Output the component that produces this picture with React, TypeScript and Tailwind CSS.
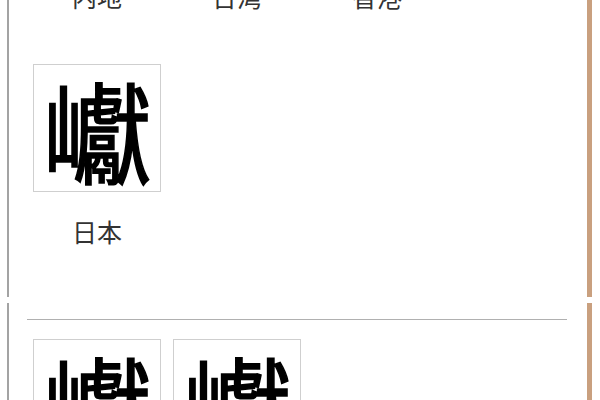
import React from "react";

const cjk = { fontFamily: '"Noto Sans CJK JP", "Noto Sans CJK SC", sans-serif' };

const GlyphBox: React.FC<{ ch: string }> = ({ ch }) => (
  <div
    className="w-[128px] h-[128px] border border-[#cfcfcf] flex items-center justify-center text-[110px] leading-none text-black [-webkit-text-stroke:1.5px_black] overflow-hidden"
    style={cjk}
  >
    {ch}
  </div>
);

const Label: React.FC<{ text: string }> = ({ text }) => (
  <div className="w-[128px] text-center text-[25px] leading-[30px] text-[#333]" style={cjk}>
    {text}
  </div>
);

export default function App() {
  const top = ["内地", "台湾", "香港"];

  return (
    <div className="w-[600px] h-[400px] overflow-hidden bg-white">
      {/* card one: end of the variants list */}
      <div className="ml-[7px] mr-[8px] h-[297px] border-l-2 border-[#a3a3a3] border-r-[5px] border-r-[#c9a07f] pl-[24px] overflow-hidden">
        <div className="-mt-[19px] flex gap-[12px]">
          {top.map((t) => (
            <Label key={t} text={t} />
          ))}
        </div>
        <div className="mt-[53px] flex flex-col gap-[24px] w-[128px]">
          <GlyphBox ch="巘" />
          <Label text="日本" />
        </div>
      </div>

      {/* card two */}
      <div className="mt-[6px] ml-[7px] mr-[8px] h-[200px] border-l-2 border-[#a3a3a3] border-r-[5px] border-r-[#c9a07f]">
        <div className="pt-[16px] ml-[18px] mr-[20px]">
          <div className="h-px bg-[#b0b0b0]" />
        </div>
        <div className="mt-[19px] pl-[24px] flex gap-[12px]">
          <GlyphBox ch="巘" />
          <GlyphBox ch="巘" />
        </div>
      </div>
    </div>
  );
}
